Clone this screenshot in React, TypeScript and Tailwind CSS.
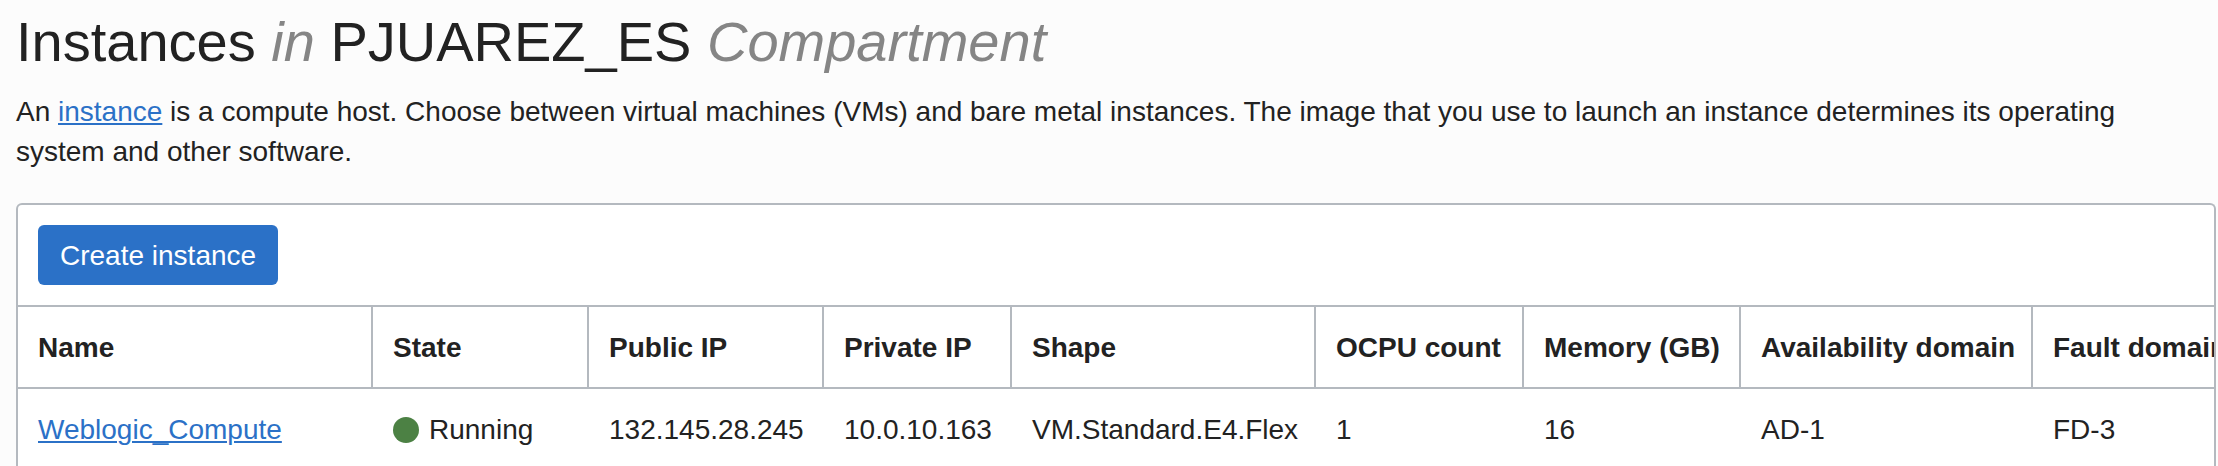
type Column = { label: string; width: string };

const columns: Column[] = [
  { label: "Name", width: "w-[355px]" },
  { label: "State", width: "w-[216px]" },
  { label: "Public IP", width: "w-[235px]" },
  { label: "Private IP", width: "w-[188px]" },
  { label: "Shape", width: "w-[304px]" },
  { label: "OCPU count", width: "w-[208px]" },
  { label: "Memory (GB)", width: "w-[217px]" },
  { label: "Availability domain", width: "w-[292px]" },
  { label: "Fault domain", width: "w-[208px]" },
];

const instances = [
  {
    name: "Weblogic_Compute",
    state: "Running",
    details: ["132.145.28.245", "10.0.10.163", "VM.Standard.E4.Flex", "1", "16", "AD-1", "FD-3"],
  },
];

const linkStyle = "text-[#2b71c7] underline decoration-2 underline-offset-2";
const cellPadding = "px-5 pt-[21px] pb-[19px]";

function InstanceTable() {
  return (
    <div className="overflow-hidden">
      <table className="w-[2223px] table-fixed border-separate border-spacing-0 text-left whitespace-nowrap">
        <thead>
          <tr>
            {columns.map((column) => (
              <th
                key={column.label}
                scope="col"
                className={`${column.width} ${cellPadding} border-r-2 border-b-2 border-[#b4b9bf] font-bold`}
              >
                {column.label}
              </th>
            ))}
          </tr>
        </thead>
        <tbody>
          {instances.map((instance) => (
            <tr key={instance.name}>
              <td className={cellPadding}>
                <a href="#instance" className={linkStyle}>
                  {instance.name}
                </a>
              </td>
              <td className={cellPadding}>
                <span className="flex items-center gap-2.5">
                  <span className="size-[26px] rounded-full bg-[#4c8144]" />
                  {instance.state}
                </span>
              </td>
              {instance.details.map((value) => (
                <td key={value} className={cellPadding}>
                  {value}
                </td>
              ))}
            </tr>
          ))}
        </tbody>
      </table>
    </div>
  );
}

export default function App() {
  return (
    <main className="min-h-screen bg-[#fcfcfc] pt-2 pr-0.5 pl-4 font-['Liberation_Sans',Arial,sans-serif] text-[28px] leading-10 text-[#222]">
      <h1 className="text-[56px] leading-[68px]">
        Instances <em className="text-[#858585]">in</em> PJUAREZ_ES{" "}
        <em className="text-[#858585]">Compartment</em>
      </h1>
      <p className="mt-4 pr-10">
        An{" "}
        <a href="#help" className={linkStyle}>
          instance
        </a>{" "}
        is a compute host. Choose between virtual machines (VMs) and bare metal instances. The image that you
        use to launch an instance determines its operating system and other software.
      </p>
      <section className="mt-[31px] overflow-hidden rounded-t-md border-2 border-b-0 border-[#b4b9bf] bg-white">
        <div className="border-b-2 border-[#b4b9bf] p-5">
          <button type="button" className="rounded-md bg-[#2b71c7] px-[22px] pt-[11px] pb-[9px] text-white">
            Create instance
          </button>
        </div>
        <InstanceTable />
      </section>
    </main>
  );
}
